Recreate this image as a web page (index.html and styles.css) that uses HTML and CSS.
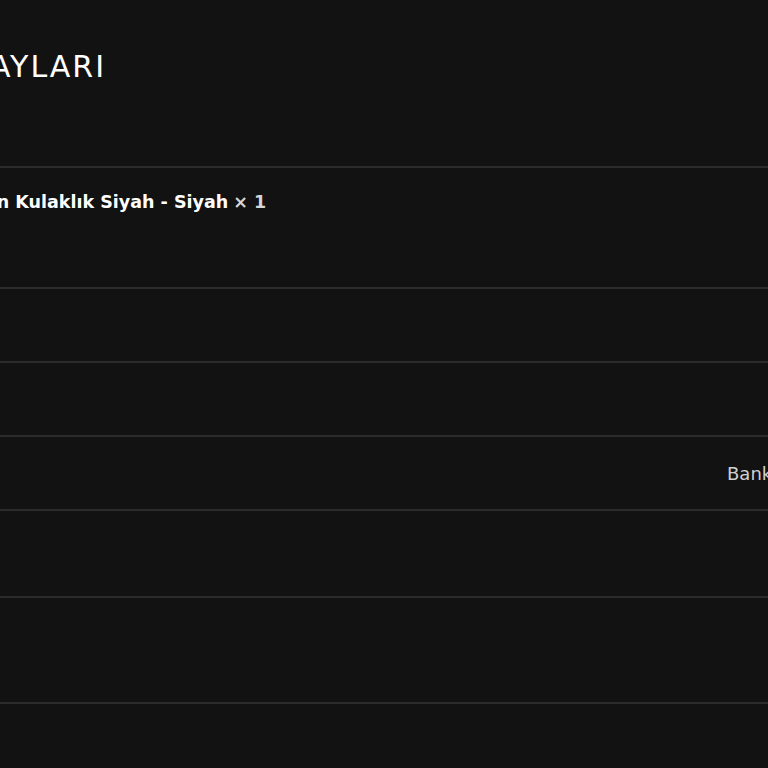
FILE: index.html
```html
<!DOCTYPE html>
<html lang="tr">
<head>
<meta charset="utf-8">
<title>Sipariş detayları</title>
<link rel="stylesheet" href="styles.css">
</head>
<body>
<main class="order">
  <h2 class="order-title">SİPARİŞ DETAYLARI</h2>
  <div class="order-table">
    <div class="row row-head">
      <div class="cell">Ürün</div>
      <div class="cell">Toplam</div>
    </div>
    <div class="row row-item">
      <div class="cell"><span class="product-name">TWS Kablosuz Oyun Kulaklık Siyah - Siyah</span> <span class="qty">× 1</span></div>
      <div class="cell"></div>
    </div>
    <div class="row row-std">
      <div class="cell"></div>
      <div class="cell"></div>
    </div>
    <div class="row row-std">
      <div class="cell"></div>
      <div class="cell"></div>
    </div>
    <div class="row row-std row-pay">
      <div class="cell"></div>
      <div class="cell pay">Banka havalesi</div>
    </div>
    <div class="row row-total">
      <div class="cell"></div>
      <div class="cell"></div>
    </div>
    <div class="row row-note">
      <div class="cell"></div>
      <div class="cell"></div>
    </div>
    <div class="row row-last">
      <div class="cell"></div>
      <div class="cell"></div>
    </div>
  </div>
</main>
</body>
</html>
```
FILE: styles.css
```css
html, body {
  margin: 0;
  padding: 0;
  background: #121212;
  height: 100%;
  overflow: hidden;
}
body {
  font-family: "DejaVu Sans", "Liberation Sans", sans-serif;
  color: #fff;
}
.order {
  margin-left: -213px;
  width: 1400px;
  padding-top: 48px;
}
.order-title {
  margin: 0;
  font-weight: 400;
  font-size: 30px;
  line-height: 38px;
  letter-spacing: 2px;
  color: #fff;
}
.row {
  display: grid;
  grid-template-columns: 914px 1fr;
  border-top: 2px solid #2b2b2b;
  box-sizing: border-box;
}
.cell {
  padding-left: 26px;
}
.row-head {
  border-top: none;
  height: 80px;
}
.row-head .cell { visibility: hidden; }
.row-item { height: 121px; }
.row-item .cell { padding-top: 24px; }
.row-std { height: 74px; }
.row-pay .cell { display: flex; align-items: center; }
.row-total { height: 87px; }
.row-note { height: 106px; }
.row-last { height: 74px; }
.product-name {
  font-weight: 700;
  font-size: 17.5px;
  color: #fff;
}
.qty {
  font-weight: 700;
  font-size: 17.5px;
  color: #d6d6d6;
}
.pay {
  font-size: 18px;
  color: #cfcfcf;
}
```
